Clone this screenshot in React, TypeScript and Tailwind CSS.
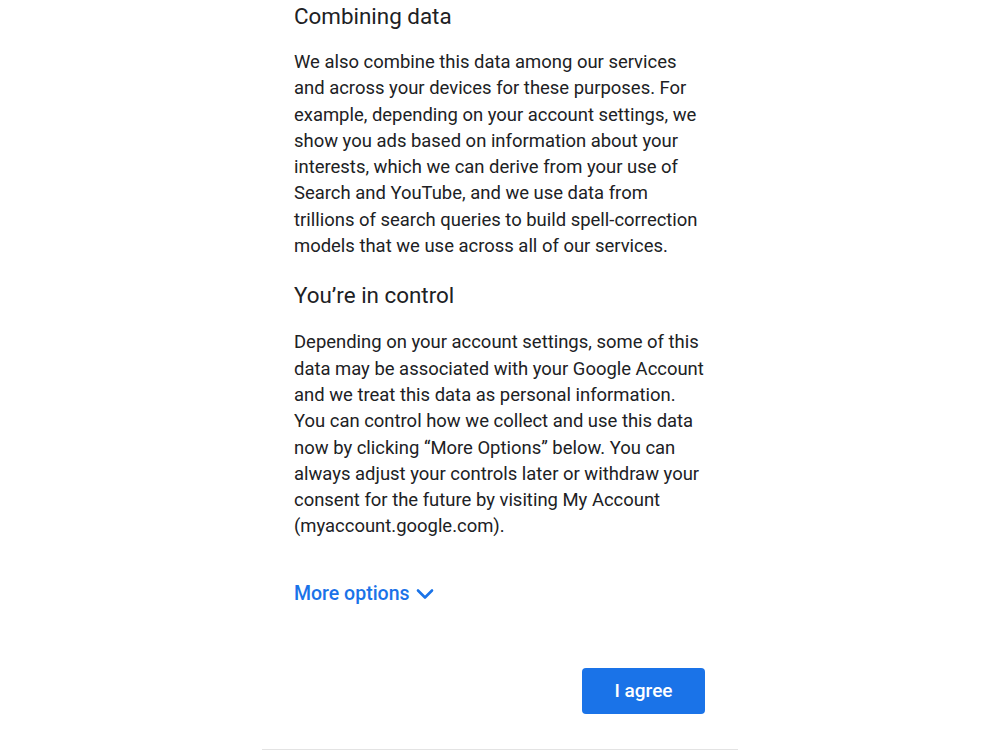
const headingFont = { fontFamily: 'Roboto, "Noto Sans", sans-serif' }

function ChevronDown() {
  return (
    <svg width="18" height="12" viewBox="0 0 18 12" className="ml-[6px] mt-[1px]" fill="none">
      <path d="M2 2.5 L9 9.5 L16 2.5" stroke="#1a73e8" strokeWidth="2.6" strokeLinecap="round" strokeLinejoin="round" />
    </svg>
  )
}

export default function App() {
  return (
    <div className="flex min-h-[750px] w-full justify-center bg-white font-['Roboto',sans-serif] text-[#202124]">
      <div className="flex w-[476px] flex-col border-b border-[#e3e3e3] pb-[34px] pl-8 pr-[30px] pt-[2px]">
        <h2 className="text-[22.4px] leading-[28px]" style={headingFont}>
          Combining data
        </h2>
        <p className="mt-[19px] text-[18.45px] leading-[26.3px]">
          We also combine this data among our services and across your devices for these purposes. For
          example, depending on your account settings, we show you ads based on information about your
          interests, which we can derive from your use of Search and YouTube, and we use data from
          trillions of search queries to build spell-correction models that we use across all of our
          services.
        </p>

        <h2 className="mt-[22px] text-[22.4px] leading-[28px]" style={headingFont}>
          You’re in control
        </h2>
        <p className="mt-[20px] text-[18.45px] leading-[26.3px]">
          Depending on your account settings, some of this data may be associated with your Google Account
          and we treat this data as personal information. You can control how we collect and use this data
          now by clicking “More Options” below. You can always adjust your controls later or withdraw your
          consent for the future by visiting My Account (myaccount.google.com).
        </p>

        <button className="mt-[42px] flex items-center self-start text-[19.5px] font-medium leading-[24px] text-[#1a73e8]">
          More options
          <ChevronDown />
        </button>

        <div className="mr-[3px] mt-[62px] flex justify-end">
          <button className="h-[46px] w-[123px] rounded-[4px] bg-[#1a73e8] text-[19px] font-medium text-white">
            I agree
          </button>
        </div>
      </div>
    </div>
  )
}
